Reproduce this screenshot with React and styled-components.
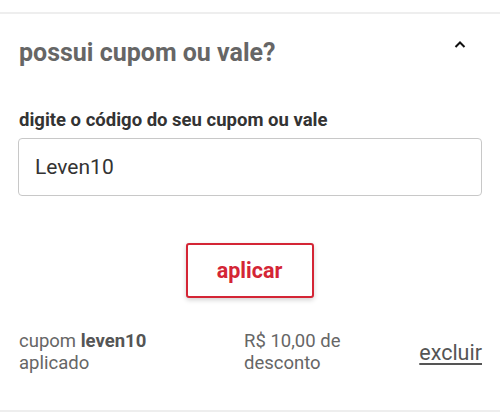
import React from 'react';
import styled, { createGlobalStyle } from 'styled-components';

const GlobalStyle = createGlobalStyle`
  body {
    margin: 0;
    background: #fff;
    font-family: Roboto, "Liberation Sans", sans-serif;
  }
`;

const Panel = styled.section`
  width: 500px;
  height: 418px;
  box-sizing: border-box;
  padding-top: 12px;
  background: #fff;
`;

const Box = styled.div`
  border-top: 2px solid #eeeeee;
  border-bottom: 2px solid #eeeeee;
  padding: 0 18px;
  height: 400px;
  box-sizing: border-box;
`;

const Header = styled.div`
  display: flex;
  align-items: flex-start;
  justify-content: space-between;
  padding-top: 22px;
  height: 95px;
  box-sizing: border-box;
`;

const Title = styled.h2`
  margin: 0;
  font-size: 25px;
  font-weight: 700;
  color: #666;
  line-height: 34px;
  padding-left: 1px;
`;

const Toggle = styled.button`
  border: 0;
  background: none;
  padding: 0;
  margin: 4px 15px 0 0;
  display: flex;
  cursor: pointer;
`;

const Label = styled.label`
  display: block;
  font-size: 18.5px;
  font-weight: 700;
  color: #333;
  line-height: 22px;
  padding-left: 1px;
  margin-bottom: 7px;
`;

const Input = styled.input`
  width: 100%;
  height: 58px;
  box-sizing: border-box;
  border: 1px solid #c8c8c8;
  border-radius: 4px;
  padding: 0 16px;
  font-family: inherit;
  font-size: 21px;
  color: #333;
  outline: none;
`;

const Actions = styled.div`
  display: flex;
  justify-content: center;
  padding-top: 47px;
  padding-right: 1px;
`;

const ApplyButton = styled.button`
  width: 128px;
  height: 55px;
  border: 2px solid #d42535;
  border-radius: 3px;
  background: #fff;
  color: #d42535;
  font-family: inherit;
  font-size: 21.5px;
  font-weight: 700;
  box-shadow: 0 2px 5px rgba(0, 0, 0, 0.18);
  cursor: pointer;
`;

const Applied = styled.div`
  display: grid;
  grid-template-columns: 225px 1fr auto;
  align-items: center;
  margin-top: 32px;
  padding-left: 1px;
`;

const Info = styled.div`
  font-size: 18.5px;
  line-height: 22px;
  color: #666;

  strong {
    font-weight: 700;
    color: #555;
  }
`;

const Remove = styled.a`
  font-size: 21.5px;
  color: #555;
  text-decoration: underline;
  text-underline-offset: 3px;
  cursor: pointer;
`;

const ChevronUp = () => (
  <svg width="14" height="9" viewBox="0 0 14 9" fill="none">
    <path d="M2.5 7 L7 2.5 L11.5 7" stroke="#111" strokeWidth="2" />
  </svg>
);

export default function App() {
  return (
    <>
      <GlobalStyle />
      <Panel>
        <Box>
          <Header>
            <Title>possui cupom ou vale?</Title>
            <Toggle aria-label="recolher">
              <ChevronUp />
            </Toggle>
          </Header>
          <Label htmlFor="cupom">digite o código do seu cupom ou vale</Label>
          <Input id="cupom" defaultValue="Leven10" />
          <Actions>
            <ApplyButton>aplicar</ApplyButton>
          </Actions>
          <Applied>
            <Info>
              cupom <strong>leven10</strong>
              <br />
              aplicado
            </Info>
            <Info>
              R$ 10,00 de
              <br />
              desconto
            </Info>
            <Remove>excluir</Remove>
          </Applied>
        </Box>
      </Panel>
    </>
  );
}
